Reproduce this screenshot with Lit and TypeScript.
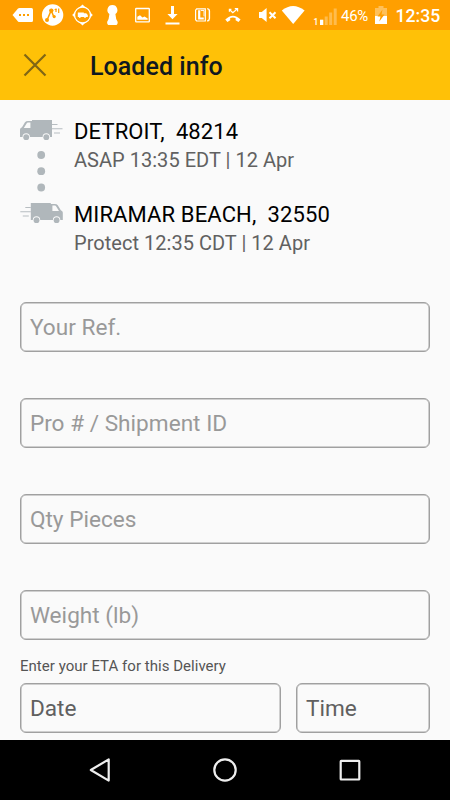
import { LitElement, html, css, svg } from "lit";
import { customElement, property } from "lit/decorators.js";

const truckBody = svg`
  <path d="M12 0H32V17H30A3.7 3.7 0 0 0 22.6 17H9.9A3.7 3.7 0 0 0 2.5 17H0V9.5Q0 8 2 7.3L5 2.2Q6 1 8 1H12Z"/>
  <path d="M8 2.6H10.4V8H3.8L6.6 3.4Q7 2.6 8 2.6Z" fill="#fafafa"/>
  <circle cx="6.2" cy="17.2" r="2.9"/>
  <circle cx="26.3" cy="17.2" r="2.9"/>
  <path d="M32 4.5H37.5M32 8.7H42.5M34 13H40" stroke="#b7bdc1" stroke-width="1.1"/>`;

const statusIcons = [
  // message tag
  svg`<path d="M4.5 15L10 8.6Q10.6 8 11.5 8H23.5Q25 8 25 9.5V20.5Q25 22 23.5 22H11.5Q10.6 22 10 21.4Z" fill="#fff"/>
      <path d="M11 15h2M15 15h2M19 15h2" stroke="#ff9f00" stroke-width="1.8"/>`,
  // route badge
  svg`<circle cx="14.6" cy="15" r="10.7" fill="#fff"/>
      <path d="M9.3 19.5L13.2 10.5L15.8 16.8" fill="none" stroke="#ff9f00" stroke-width="1.5"/>
      <circle cx="9" cy="20" r="2" fill="#ff9f00"/><circle cx="13.3" cy="10.6" r="2.2" fill="#ff9f00"/>
      <circle cx="16.2" cy="16.6" r="1.6" fill="#ff9f00"/><path d="M16.6 9.5H18.8M18 8.6V12M20.7 8.5V13" stroke="#ff9f00" stroke-width="1.2"/>`,
  // truck tracker
  svg`<circle cx="14.5" cy="15" r="8" fill="none" stroke="#fff" stroke-width="1.3"/>
      <path d="M11.7 7.3L14.5 4.5l2.8 2.8zM11.7 22.7L14.5 25.5l2.8-2.8zM6.8 12.2L4.2 15 6.8 17.8zM22.2 12.2L24.8 15 22.2 17.8z" fill="#fff"/>
      <path d="M9.8 12.6h6v.6h2.4l1.6 1.9v2H9.8z" fill="#fff"/><circle cx="11.8" cy="17" r=".9" fill="#fff"/><circle cx="17" cy="17" r=".9" fill="#fff"/>`,
  // keyhole
  svg`<path d="M14.4 5A5 5 0 0 1 17.4 14Q17.7 19 19.7 22Q19.7 25 18.5 25H10.3Q9.1 25 9.1 22Q11.1 19 11.4 14A5 5 0 0 1 14.4 5Z" fill="#fff"/>`,
  // picture
  svg`<rect x="7.7" y="8.5" width="13.6" height="13.4" rx=".5" fill="none" stroke="#fff" stroke-width="1.3"/>
      <path d="M9.3 19.8V16.7L12 15.2L14.5 17.5L16.5 16.5L19.7 18.5V19.8Z" fill="#fff"/>`,
  // download
  svg`<path d="M13 6h3v8h3.6L14.5 19.3 9.4 14H13zM7.5 22.5h14v2h-14z" fill="#fff"/>`,
  // card stack
  svg`<path d="M8.6 8.9H17.3V21H8.6L7.6 19.8V10.1Z" fill="none" stroke="#fff" stroke-width="1.2"/>
      <path d="M11.2 10.3v8.2h4.6" fill="none" stroke="#fff" stroke-width="2.2"/><path d="M12.8 10.5h3.2v5.8" fill="none" stroke="#fff" stroke-width=".9"/>
      <path d="M19.2 8.6Q21.4 9 21.4 11V18.5Q21.4 20.5 19.2 21" fill="none" stroke="#fff" stroke-width="1.4"/>`,
  // missed call
  svg`<path d="M11.5 9.5L14.8 12.6L19.2 9M16.8 8.7H19.6V11.4M11.4 11.8V9.4H13.4" fill="none" stroke="#fff" stroke-width="1.2"/>
      <path d="M7.3 19.6Q14.9 11.8 22.6 19.6L20.5 21.9L17.6 20.2V18Q14.9 17 12.2 18V20.2L9.4 21.9Z" fill="#fff"/>`,
  // muted speaker
  svg`<path d="M11 12h2.8L18.6 8V22L13.8 18H11z" fill="#fff"/>
      <path d="M21.5 12.2L27.5 18.2M27.5 12.2L21.5 18.2" stroke="#fff" stroke-width="2"/>`,
];

@customElement("status-bar")
export class StatusBar extends LitElement {
  static styles = css`
    :host { display: flex; height: 30px; background: #ff9f00; padding-left: 8px; box-sizing: border-box; color: #fff; }
    svg { display: block; flex: none; }
    .pct { width: 31px; margin-left: 1px; font-size: 15px; line-height: 32px; letter-spacing: -0.3px; white-space: nowrap; }
    .clock { margin-left: 5.5px; font-size: 17.6px; font-weight: 500; line-height: 32px; }
    .slot { font-size: 8.5px; font-weight: 500; fill: #fff; }
  `;
  render() {
    return html`
      ${statusIcons.map((i) => html`<svg width="30" height="30" viewBox="0 0 30 30">${i}</svg>`)}
      <svg width="30" height="30" viewBox="0 0 30 30"><path d="M3.8 10.6Q15 1.5 26.6 10.6L15.2 24Z" fill="#fff"/></svg>
      <svg width="32" height="30" viewBox="0 0 32 30">
        <text class="slot" x="5.4" y="25">1</text>
        <path d="M12 19.7h3.3V25H12z" fill="#fff"/>
        <path d="M16.7 16.5h3V25h-3zM21.2 12.5h3V25h-3zM25.7 8.5h3V25h-3z" fill="#fff" opacity=".3"/>
      </svg>
      <span class="pct">46%</span>
      <svg width="18" height="30" viewBox="0 0 18 30">
        <path d="M3 8h3.5V6h5v2H15v8H3z" fill="#fff" opacity=".35"/>
        <path d="M3 16h12v8H3z" fill="#fff"/>
        <path d="M10.5 9.5L5.5 16.5h3L7.3 21.5L12.5 14.5h-3z" fill="#ff9f00"/>
      </svg>
      <span class="clock">12:35</span>`;
  }
}

@customElement("outlined-field")
export class OutlinedField extends LitElement {
  @property() label = "";
  static styles = css`
    :host {
      display: block; box-sizing: border-box; height: 50px; padding-left: 8.9px;
      border: 1px solid #a0a0a0; box-shadow: inset 0 0 0 0.5px #a4a4a4; border-radius: 6px;
      font-size: 22.6px; line-height: 50.6px; letter-spacing: 0.02px; white-space: nowrap; color: #999;
    }
    :host([dark]) { color: #606060; }
  `;
  render() {
    return html`${this.label}`;
  }
}

@customElement("app-root")
export class AppRoot extends LitElement {
  static styles = css`
    :host {
      display: flex; flex-direction: column; height: 800px; overflow: hidden;
      background: #fafafa; font-family: Roboto, sans-serif;
    }
    status-bar { flex: none; }
    .toolbar { display: flex; align-items: center; height: 70px; flex: none; background: #ffc107; padding-left: 23px; }
    .toolbar svg { display: block; }
    .title { margin: 4px 0 0 43px; font-size: 25px; line-height: 30px; letter-spacing: 0.05px; font-weight: 500; color: #101820; }
    .route { display: grid; grid-template-columns: 43px 1fr; column-gap: 11px; padding: 18px 20px 0; }
    .rail { display: flex; flex-direction: column; }
    .rail svg { display: block; fill: #b0b7bb; }
    .stop { height: 82.5px; }
    .place { font-size: 22px; line-height: 28px; letter-spacing: 0.12px; color: #000; white-space: pre; }
    .when { font-size: 20px; line-height: 28px; letter-spacing: 0.03px; color: #616161; white-space: pre; }
    .form { display: flex; flex-direction: column; gap: 46.3px; padding: 18.5px 20px 0; }
    .hint { padding: 17px 20px 0; font-size: 15px; line-height: 18px; letter-spacing: 0.03px; color: #555; }
    .pair { display: grid; grid-template-columns: 261px 134px; column-gap: 15px; padding: 8px 20px 0; }
    .spacer { flex: 1; }
    .nav { flex: none; height: 60px; background: #000; display: flex; justify-content: center; gap: 95px; align-items: center; }
    .nav svg { display: block; fill: none; stroke: #eee; stroke-width: 2.2; }
  `;
  render() {
    return html`
      <status-bar></status-bar>
      <div class="toolbar">
        <svg width="24" height="24" viewBox="0 0 24 24"><path d="M1.5 1.5L22.5 22.5M22.5 1.5L1.5 22.5" stroke="#7f6616" stroke-width="2.2"/></svg>
        <div class="title">Loaded info</div>
      </div>
      <div class="route">
        <div class="rail">
          <svg width="43" height="120" viewBox="0 0 43 120">
            <g transform="translate(0 2)">${truckBody}</g>
            <circle cx="21.2" cy="37" r="3.9"/><circle cx="21.2" cy="53.2" r="3.9"/><circle cx="21.2" cy="69.5" r="3.9"/>
            <g transform="translate(42.8 85) scale(-1 1)">${truckBody}</g>
          </svg>
        </div>
        <div>
          <div class="stop"><div class="place">DETROIT,  48214</div><div class="when">ASAP 13:35 EDT | 12 Apr</div></div>
          <div class="stop"><div class="place">MIRAMAR BEACH,  32550</div><div class="when">Protect 12:35 CDT | 12 Apr</div></div>
        </div>
      </div>
      <div class="form">
        ${["Your Ref.", "Pro # / Shipment ID", "Qty Pieces", "Weight (lb)"].map((l) => html`<outlined-field label=${l}></outlined-field>`)}
      </div>
      <div class="hint">Enter your ETA for this Delivery</div>
      <div class="pair">
        <outlined-field dark label="Date"></outlined-field>
        <outlined-field dark label="Time"></outlined-field>
      </div>
      <div class="spacer"></div>
      <div class="nav">
        <svg width="30" height="30" viewBox="0 0 30 30"><path d="M5.8 15L23.7 4.4V25.6Z" stroke-linejoin="round"/></svg>
        <svg width="30" height="30" viewBox="0 0 30 30"><circle cx="15" cy="15" r="10.7"/></svg>
        <svg width="30" height="30" viewBox="0 0 30 30"><rect x="5.7" y="5.9" width="18.6" height="18.6" rx=".5"/></svg>
      </div>`;
  }
}
